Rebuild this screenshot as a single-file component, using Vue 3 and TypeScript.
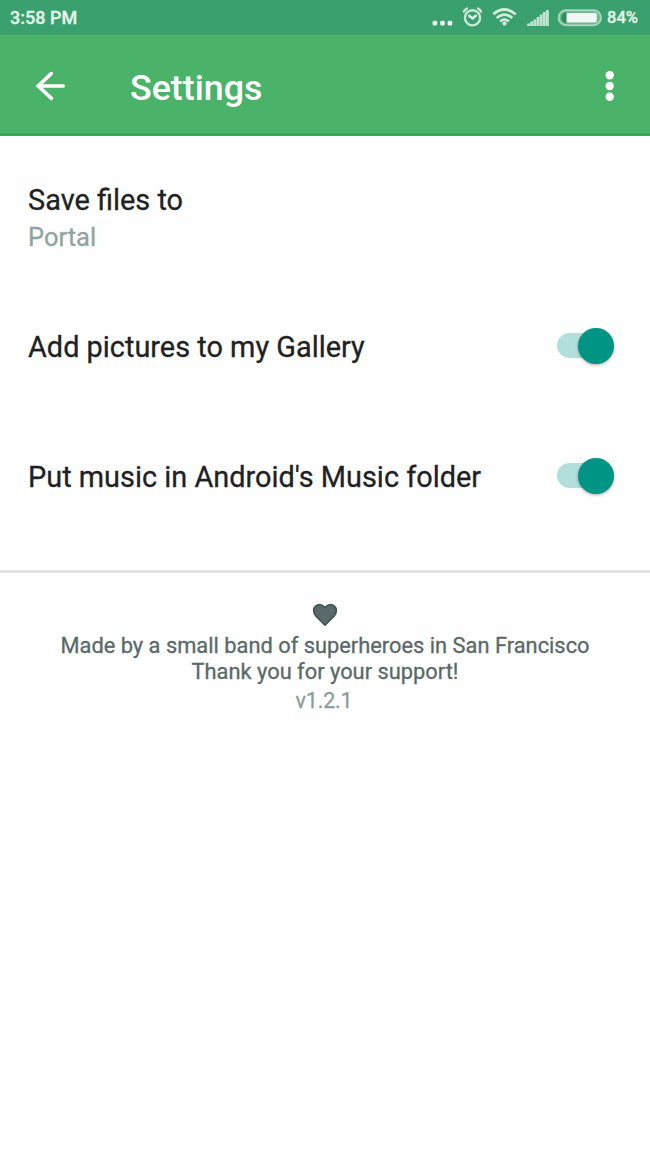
<script setup lang="ts">
import { ref } from 'vue'

interface ToggleSetting {
  id: string
  label: string
  enabled: boolean
}

const settings = ref<ToggleSetting[]>([
  { id: 'gallery', label: 'Add pictures to my Gallery', enabled: true },
  { id: 'music', label: "Put music in Android's Music folder", enabled: true },
])

const signalBars = [2.5, 4.5, 6.5, 9, 11.500, 14, 16]
</script>

<template>
  <div class="screen">
    <div class="status">
      <span class="time">3:58 PM</span>
      <svg class="status-icons" width="175" height="35" viewBox="0 0 175 35">
        <g fill="#edf8f1">
          <rect x="2.6" y="20.8" width="4.600" height="4.600" rx="1.500" />
          <rect x="10.200" y="20.800" width="4.600" height="4.600" rx="1.500" />
          <rect x="17.600" y="20.800" width="4.600" height="4.600" rx="1.500" />
        </g>
        <g fill="none" stroke="#c9e7d6" stroke-width="2.400" stroke-linecap="round">
          <circle cx="42.500" cy="17.800" r="7.600" />
          <path d="M39.200 15.800l3.300 2.600 3.300-2.600" stroke="#e6f5ec" />
          <path d="M33.900 11.600q.8-2.200 3-3M51.100 11.600q-.8-2.200-3-3" />
        </g>
        <g fill="none" stroke="#d3ecdd" stroke-width="2.700">
          <path d="M63.300 14.200q11.200-9.400 22.400 0" />
          <path d="M66.700 18q7.800-6.800 15.600 0" />
          <path d="M70.200 21.500q4.300-3.600 8.600 0" />
        </g>
        <circle cx="74.500" cy="23.400" r="2" fill="#e3f3e9" />
        <g fill="#c3e4d1">
          <rect
            v-for="(h, i) in signalBars"
            :key="i"
            :x="97.2 + i * 3.12"
            :y="26 - h"
            width="2.9"
            :height="h"
          />
        </g>
        <rect x="128.600" y="10.200" width="42.400" height="15" rx="7.500" fill="#6ab98f" stroke="#a5d5ba" stroke-width="2" />
        <path d="M136 11.800q-4.600 1.500-4.600 5.900t4.600 5.900z" fill="#2b905b" />
        <rect x="136.800" y="13" width="30" height="9.400" rx="1.500" fill="#f0f9f3" />
      </svg>
      <span class="battery">84%</span>
    </div>

    <header class="appbar">
      <svg class="back" width="30" height="30" viewBox="0 0 30 30">
        <path
          d="M16.200 2.600L3.200 15l13.200 12.400M3.600 15H28.200"
          fill="none"
          stroke="#fff"
          stroke-width="3.600"
          stroke-linecap="round"
        />
      </svg>
      <h1 class="title">Settings</h1>
      <svg class="more" width="10" height="32" viewBox="0 0 10 32">
        <g fill="#fff">
          <circle cx="4.700" cy="5.200" r="4.200" />
          <circle cx="4.700" cy="16" r="4.200" />
          <circle cx="4.700" cy="26.800" r="4.200" />
        </g>
      </svg>
    </header>

    <main>
      <section class="location">
        <div class="label save">Save files to</div>
        <div class="value">Portal</div>
      </section>
      <section
        v-for="s in settings"
        :key="s.id"
        class="row"
        @click="s.enabled = !s.enabled"
      >
        <span class="label">{{ s.label }}</span>
        <span class="switch" :class="{ on: s.enabled }"><span class="thumb"></span></span>
      </section>
    </main>

    <footer class="footer">
      <svg class="heart" width="26" height="24" viewBox="0 0 26 24">
        <path
          d="M13 22.200L4 13.200C.6 9.600 1.200 5.200 3.600 3.200 6.400 .8 10.600 1.200 13 4.600 15.400 1.200 19.600 .8 22.400 3.200c2.400 2 3 6.400-.4 10z"
          fill="#586a69"
          stroke="#3f5150"
          stroke-width="1.600"
          stroke-linejoin="round"
        />
      </svg>
      <p class="made">Made by a small band of superheroes in San Francisco</p>
      <p class="thanks">Thank you for your support!</p>
      <p class="version">v1.2.1</p>
    </footer>
  </div>
</template>

<style>
body {
  background: #fefefe;
}
</style>

<style scoped>
.screen {
  box-sizing: border-box;
  width: 650px;
  height: 1156px;
  overflow: hidden;
  background: #fefefe;
  font-family: Roboto, "Liberation Sans", sans-serif;
  white-space: nowrap;
}
.status {
  display: flex;
  align-items: center;
  height: 35px;
  padding-left: 10px;
  background: #3aa06e;
  color: #e3f5ea;
}
.time {
  width: 420px;
  font-size: 18px;
  font-weight: 500;
  line-height: 36px;
  -webkit-text-stroke: 0.3px;
}
.status-icons {
  flex: none;
}
.battery {
  margin-left: 2px;
  font-size: 16.500px;
  font-weight: 500;
  line-height: 36px;
  -webkit-text-stroke: 0.3px;
}
.appbar {
  box-sizing: border-box;
  display: flex;
  align-items: center;
  height: 101px;
  padding: 3px 35px 0 35px;
  background: #4bb369;
  border-bottom: 3px solid #35a853;
}
.title {
  flex: 1;
  margin: 4px 0 0 65px;
  color: #fff;
  font-size: 35.800px;
  font-weight: 500;
  line-height: 44px;
}
.location {
  height: 99px;
  padding: 46px 28px 0;
}
.label {
  color: #1e2223;
  font-size: 28.900px;
  line-height: 36px;
  -webkit-text-stroke: 0.3px;
}
.value {
  margin-top: 1px;
  color: #90a4a3;
  font-size: 25.500px;
  line-height: 36px;
  -webkit-text-stroke: 0.3px;
}
.row {
  display: flex;
  align-items: center;
  justify-content: space-between;
  height: 130px;
  padding: 0 36px 0 28px;
}
.location,
.row {
  box-sizing: content-box;
}
.location {
  height: 100px;
}
.switch {
  display: flex;
  align-items: center;
  width: 57px;
  height: 25px;
  margin-top: -3px;
  border-radius: 13px;
  background: #cfcfcf;
}
.switch.on {
  justify-content: flex-end;
  background: #b2dfdb;
}
.thumb {
  flex: none;
  width: 36px;
  height: 36px;
  border-radius: 50%;
  background: #009485;
  box-shadow: 0 1px 3px rgba(60, 30, 30, 0.4);
}
.footer {
  display: flex;
  flex-direction: column;
  align-items: center;
  margin-top: 28px;
  padding-top: 30px;
  border-top: 3px solid #e3e3e3;
  color: #5a6968;
  font-size: 21.850px;
  -webkit-text-stroke: 0.3px;
}
.heart {
  display: block;
  margin-left: -1px;
}
.footer p {
  margin: 0;
  line-height: 26px;
}
.made {
  padding-top: 6px;
}
.footer .version {
  margin: 3px 2px 0 0;
  color: #8a9c9b;
  font-size: 21.500px;
  letter-spacing: -0.2px;
}
</style>
